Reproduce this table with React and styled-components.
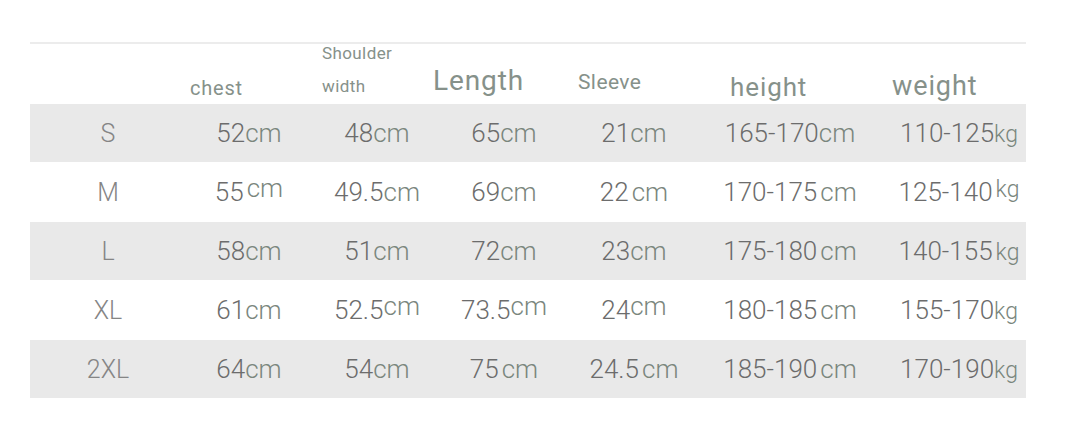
import React from 'react';
import styled, {createGlobalStyle} from 'styled-components';

const Global = createGlobalStyle`
  html, body {
    margin: 0;
    padding: 0;
    background: #fff;
  }
  body {
    font-family: Roboto, "Noto Sans", "Liberation Sans", sans-serif;
  }
`;

const COLS = '154px 132px 122px 130px 130px 184px 144px';

const Page = styled.div`
  width: 1080px;
  height: 438px;
  padding: 42px 0 0 30px;
  box-sizing: border-box;
`;

const Table = styled.div`
  width: 996px;
  border-top: 2px solid #ececec;
`;

const HeaderRow = styled.div`
  display: grid;
  grid-template-columns: ${COLS};
  height: 60px;
`;

const HeadCell = styled.div`
  align-self: end;
  margin-left: ${p => p.$left}px;
  padding-bottom: ${p => p.$bottom}px;
  font-size: ${p => p.$size}px;
  letter-spacing: ${p => p.$spacing || 0}px;
  line-height: 1;
  color: #86918a;
  white-space: nowrap;
`;

const Stack = styled.div`
  display: flex;
  flex-direction: column;
  gap: 16px;
`;

const Row = styled.div`
  display: grid;
  grid-template-columns: ${COLS};
  align-items: center;
  height: ${p => p.$h}px;
  background: ${p => (p.$shade ? '#e9e9e9' : '#fff')};
`;

const Size = styled.div`
  text-align: center;
  font-size: 25px;
  font-weight: 300;
  color: #858585;
  padding-left: 2px;
`;

const Value = styled.div`
  text-align: center;
  font-size: 26px;
  font-weight: 300;
  color: #6c6c6c;
  white-space: nowrap;
  margin-left: ${p => p.$shift || 0}px;
`;

const Unit = styled.span`
  color: #7a867d;
  font-size: ${p => (p.$small ? 23 : 26)}px;
  position: relative;
  top: ${p => (p.$up ? -4 : 0)}px;
  margin-left: ${p => (p.$gap ? 3 : 0)}px;
`;

const rows = [
  {size: 'S', h: 58, cells: [['52', 'cm'], ['48', 'cm'], ['65', 'cm'], ['21', 'cm'], ['165-170', 'cm'], ['110-125', 'kg', 's']]},
  {size: 'M', h: 60, cells: [['55', 'cm', 'gu'], ['49.5', 'cm'], ['69', 'cm'], ['22', 'cm', 'g'], ['170-175', 'cm', 'g'], ['125-140', 'kg', 'gsu']]},
  {size: 'L', h: 58, cells: [['58', 'cm'], ['51', 'cm'], ['72', 'cm'], ['23', 'cm'], ['175-180', 'cm', 'g'], ['140-155', 'kg', 'gs']]},
  {size: 'XL', h: 60, cells: [['61', 'cm'], ['52.5', 'cm', 'u'], ['73.5', 'cm', 'u'], ['24', 'cm', 'u'], ['180-185', 'cm', 'g'], ['155-170', 'kg', 's']]},
  {size: '2XL', h: 58, cells: [['64', 'cm'], ['54', 'cm'], ['75', 'cm', 'g'], ['24.5', 'cm', 'g'], ['185-190', 'cm', 'g'], ['170-190', 'kg', 's']]},
];

const shifts = [-2, 0, 2, 2, 0, 10];

const Cell = ({num, unit, flags = '', shift}) => (
  <Value $shift={shift}>
    {num}
    <Unit $gap={flags.includes('g')} $small={flags.includes('s')} $up={flags.includes('u')}>{unit}</Unit>
  </Value>
);

const App = () => (
  <Page>
    <Global />
    <Table>
      <HeaderRow>
        <div />
        <HeadCell $left={6} $bottom={6} $size={20} $spacing={0.8}>chest</HeadCell>
        <HeadCell $left={6} $bottom={9} $size={17} $spacing={0.4}>
          <Stack><span>Shoulder</span><span>width</span></Stack>
        </HeadCell>
        <HeadCell $left={-5} $bottom={9} $size={28} $spacing={0.9}>Length</HeadCell>
        <HeadCell $left={10} $bottom={11} $size={21} $spacing={0.4}>Sleeve</HeadCell>
        <HeadCell $left={32} $bottom={4} $size={26} $spacing={0.9}>height</HeadCell>
        <HeadCell $left={10} $bottom={4} $size={27} $spacing={0.9}>weight</HeadCell>
      </HeaderRow>
      {rows.map((r, i) => (
        <Row key={r.size} $h={r.h} $shade={i % 2 === 0}>
          <Size>{r.size}</Size>
          {r.cells.map(([num, unit, flags], j) => (
            <Cell key={j} num={num} unit={unit} flags={flags} shift={shifts[j]} />
          ))}
        </Row>
      ))}
    </Table>
  </Page>
);

export default App;
